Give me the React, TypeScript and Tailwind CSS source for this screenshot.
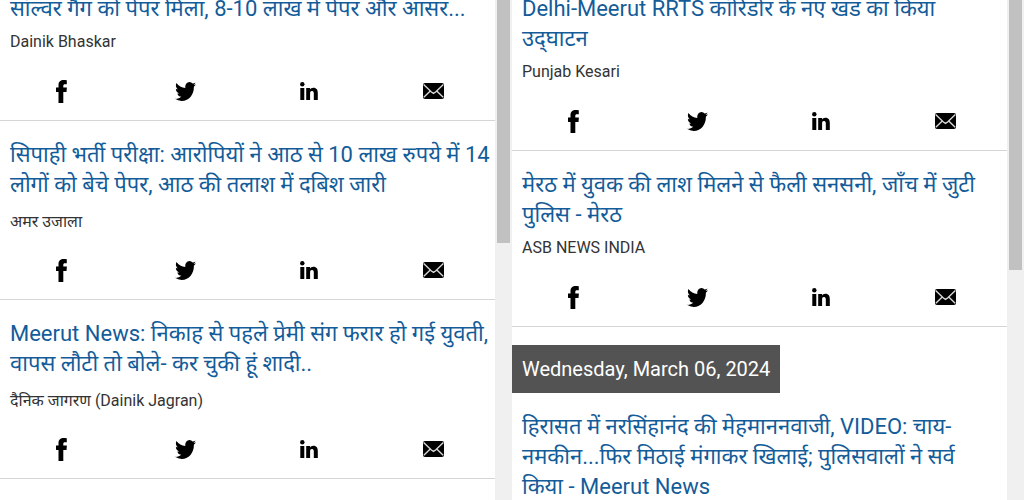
import React from 'react';

type Story = {
  lines: string[];
  source: string;
  lang: 'en' | 'hi';
};

const leftStories: Story[] = [
  {
    lines: ['सॉल्वर गैंग को पेपर मिला, 8-10 लाख में पेपर और आंसर...'],
    source: 'Dainik Bhaskar',
    lang: 'en',
  },
  {
    lines: [
      'सिपाही भर्ती परीक्षा: आरोपियों ने आठ से 10 लाख रुपये में 14',
      'लोगों को बेचे पेपर, आठ की तलाश में दबिश जारी',
    ],
    source: 'अमर उजाला',
    lang: 'hi',
  },
  {
    lines: [
      'Meerut News: निकाह से पहले प्रेमी संग फरार हो गई युवती,',
      'वापस लौटी तो बोले- कर चुकी हूं शादी..',
    ],
    source: 'दैनिक जागरण (Dainik Jagran)',
    lang: 'hi',
  },
];

const rightStories: Story[] = [
  {
    lines: ['Delhi-Meerut RRTS कॉरिडोर के नए खंड का किया', 'उद्\u200cघाटन'],
    source: 'Punjab Kesari',
    lang: 'en',
  },
  {
    lines: ['मेरठ में युवक की लाश मिलने से फैली सनसनी, जाँच में जुटी', 'पुलिस - मेरठ'],
    source: 'ASB NEWS INDIA',
    lang: 'en',
  },
];

const wednesdayStories: Story[] = [
  {
    lines: [
      'हिरासत में नरसिंहानंद की मेहमाननवाजी, VIDEO: चाय-',
      'नमकीन...फिर मिठाई मंगाकर खिलाई; पुलिसवालों ने सर्व',
      'किया - Meerut News',
    ],
    source: 'Dainik Bhaskar',
    lang: 'en',
  },
];

function FacebookIcon() {
  return (
    <svg viewBox="0 0 11 23" className="w-[11px] h-[23px]" aria-hidden="true">
      <path d="M2.5 23V12H0V7.5h2.5V5C2.5 1.5 4.500 0 7.800 0c1.200 0 2.400.1 3 .2v4.100H9c-1.300 0-1.700.6-1.700 1.500v1.700h3.600l-.4 4.500H7.300V23z" />
    </svg>
  );
}

function TwitterIcon() {
  return (
    <svg viewBox="4 6.2 24 19.6" preserveAspectRatio="none" className="w-[21px] h-[19px]" aria-hidden="true">
      <path d="M28 8.557a9.913 9.913 0 0 1-2.828.775 4.93 4.93 0 0 0 2.166-2.725 9.738 9.738 0 0 1-3.13 1.194 4.92 4.92 0 0 0-3.593-1.55 4.924 4.924 0 0 0-4.794 6.049c-4.09-.21-7.72-2.17-10.15-5.15a4.942 4.942 0 0 0-.665 2.477c0 1.71.87 3.214 2.19 4.1a4.968 4.968 0 0 1-2.23-.616v.06c0 2.39 1.7 4.38 3.952 4.83-.414.115-.85.174-1.297.174-.318 0-.626-.03-.928-.086a4.935 4.935 0 0 0 4.6 3.42 9.893 9.893 0 0 1-6.114 2.107c-.398 0-.79-.023-1.175-.068a13.953 13.953 0 0 0 7.55 2.213c9.056 0 14.01-7.507 14.01-14.013 0-.213-.005-.426-.015-.637.96-.695 1.795-1.56 2.455-2.55z" />
    </svg>
  );
}

function LinkedinIcon() {
  return (
    <svg viewBox="0 0 18 18" className="w-[18px] h-[18px]" aria-hidden="true">
      <circle cx="2.3" cy="2.2" r="2.2" />
      <path d="M.3 6h4v12h-4zM6.200 6H10v1.500c.6-1.100 1.800-1.800 3.300-1.800 3.500 0 4.500 2.300 4.500 5.400V18h-4v-6c0-1.500-.1-2.900-1.800-2.900s-1.900 1.300-1.900 2.800V18H6.200z" />
    </svg>
  );
}

function MailIcon() {
  return (
    <svg viewBox="0 0 21 16" className="w-[21px] h-4" aria-hidden="true">
      <rect width="21" height="16" rx="2" />
      <path
        d="M.6 1.600 8.400 9l2.100 1.400L12.600 9l7.800-7.400M.8 14.300 7.300 8M20.200 14.300 13.700 8"
        fill="none"
        stroke="#d8d8d8"
        strokeWidth="1.4"
      />
    </svg>
  );
}

const shareLinks = [
  { label: 'Facebook', Icon: FacebookIcon },
  { label: 'Twitter', Icon: TwitterIcon },
  { label: 'LinkedIn', Icon: LinkedinIcon },
  { label: 'Email', Icon: MailIcon },
];

function StoryItem({ story }: { story: Story }) {
  return (
    <article className="border-b border-[#d5d5d5] pt-[19px]">
      <h3 className="px-2.5 text-[22px] leading-[30px] text-[#135c99]">
        <a href="#story">
          {story.lines.map((line) => (
            <span key={line} className="block whitespace-nowrap">{line}</span>
          ))}
        </a>
      </h3>
      {/* Devanagari needs a taller line than Latin */}
      <p
        lang={story.lang}
        className={
          story.lang === 'hi'
            ? 'mt-[7px] mb-[5px] px-2.5 text-base leading-[29px] text-[#333]'
            : 'mt-[7px] mb-[9px] px-2.5 text-base leading-[22px] text-[#333]'
        }
      >
        {story.source}
      </p>
      <div className="grid h-[58px] grid-cols-4">
        {shareLinks.map(({ label, Icon }) => (
          <a key={label} href="#share" aria-label={label} className="flex items-center justify-center">
            <Icon />
          </a>
        ))}
      </div>
    </article>
  );
}

function Scrollbar({ thumbClass }: { thumbClass: string }) {
  return (
    <div className="w-[17px] shrink-0 bg-[#f0f0f0] px-0.5">
      <div className={`bg-[#c1c1c1] ${thumbClass}`} />
    </div>
  );
}

export default function App() {
  return (
    <main className="grid h-screen grid-cols-2 overflow-hidden bg-white font-[Roboto,'Noto_Sans',sans-serif]">
      <section className="flex min-w-0 overflow-hidden">
        <div className="-mt-[25px] min-w-0 flex-1">
          {leftStories.map((story) => (
            <StoryItem key={story.source} story={story} />
          ))}
        </div>
        <Scrollbar thumbClass="h-[243px]" />
      </section>
      <section className="flex min-w-0 overflow-hidden">
        <div className="-mt-[25px] min-w-0 flex-1">
          {rightStories.map((story) => (
            <StoryItem key={story.source} story={story} />
          ))}
          <h2 className="mt-[18px] w-fit bg-[#535353] px-2.5 text-xl leading-[48px] text-white">
            Wednesday, March 06, 2024
          </h2>
          {wednesdayStories.map((story) => (
            <StoryItem key={story.source} story={story} />
          ))}
        </div>
        <Scrollbar thumbClass="h-[270px]" />
      </section>
    </main>
  );
}
